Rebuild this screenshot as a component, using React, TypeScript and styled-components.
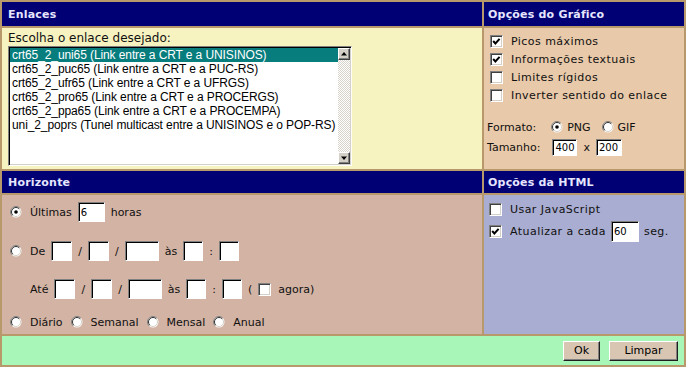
import React from "react";
import styled, { createGlobalStyle } from "styled-components";

const GlobalStyle = createGlobalStyle`
  html, body {
    margin: 0;
    padding: 0;
    background: #ffffff;
  }
  body {
    font-family: "DejaVu Sans", Verdana, sans-serif;
    font-size: 11px;
    color: #101010;
  }
`;

const Frame = styled.div`
  width: 686px;
  height: 367px;
  box-sizing: border-box;
  display: grid;
  grid-template-columns: 480px 200px;
  grid-template-rows: 24px 141px 22px 139px 29px;
  gap: 2px;
  padding: 2px;
  background: #b8996c;
`;

const Header = styled.div<{ $inset: number }>`
  background: #000074;
  color: #e6e6ff;
  font-weight: bold;
  font-size: 11px;
  display: flex;
  align-items: center;
  padding-left: ${(p) => p.$inset}px;
  letter-spacing: 0.2px;
`;

const Panel = styled.div<{ $bg: string; $pad: string }>`
  background: ${(p) => p.$bg};
  padding: ${(p) => p.$pad};
  box-sizing: border-box;
  display: flex;
  flex-direction: column;
  overflow: hidden;
`;

const Footer = styled.div`
  grid-column: 1 / -1;
  background: #a8f7b8;
  display: flex;
  justify-content: flex-end;
  align-items: center;
  gap: 9px;
  padding-right: 6px;
`;

const Label = styled.div`
  height: 13px;
  line-height: 13px;
  font-size: 12px;
  margin-bottom: 1px;
`;

const ListBox = styled.div`
  width: 344px;
  height: 120px;
  box-sizing: border-box;
  border: 1px solid;
  border-color: #808080 #ffffff #ffffff #808080;
  box-shadow: inset 1px 1px 0 #000000, inset -1px -1px 0 #d4d0c8;
  padding: 1px;
  background: #ffffff;
  display: flex;
  font-family: "Liberation Sans", Arial, sans-serif;
  font-size: 12px;
`;

const Options = styled.div`
  flex: 1;
  display: flex;
  flex-direction: column;
`;

const Option = styled.div<{ $selected?: boolean }>`
  height: 14px;
  line-height: 14px;
  padding-left: 2px;
  white-space: nowrap;
  letter-spacing: -0.1px;
  background: ${(p) => (p.$selected ? "#087d7d" : "transparent")};
  color: ${(p) => (p.$selected ? "#ffffff" : "#000000")};
`;

const ScrollBar = styled.div`
  width: 12px;
  display: flex;
  flex-direction: column;
  justify-content: space-between;
  background: repeating-conic-gradient(#ffffff 0 25%, #d8d4cc 0 50%) 0 0 / 2px 2px;
`;

const ScrollButton = styled.div`
  width: 12px;
  height: 12px;
  box-sizing: border-box;
  background: #d4d0c8;
  border: 1px solid;
  border-color: #ffffff #404040 #404040 #ffffff;
  box-shadow: inset -1px -1px 0 #808080;
  display: flex;
  align-items: center;
  justify-content: center;
`;

const Row = styled.div<{ $h: number; $top?: number; $left?: number; $gap?: number }>`
  height: ${(p) => p.$h}px;
  margin-top: ${(p) => p.$top ?? 0}px;
  margin-left: ${(p) => p.$left ?? 0}px;
  display: flex;
  align-items: center;
  gap: ${(p) => p.$gap ?? 6}px;
  white-space: nowrap;
`;

const Text = styled.span<{ $ml?: number; $wide?: boolean }>`
  margin-left: ${(p) => p.$ml ?? 0}px;
  line-height: 13px;
  letter-spacing: ${(p) => (p.$wide ? "0.45px" : "normal")};
`;

const Spacer = styled.span<{ $w: number }>`
  width: ${(p) => p.$w}px;
  flex: none;
`;

const Field = styled.input<{ $w: number; $h: number }>`
  width: ${(p) => p.$w}px;
  height: ${(p) => p.$h}px;
  box-sizing: border-box;
  flex: none;
  margin: 0;
  padding: 0 0 0 2px;
  background: #ffffff;
  border: 1px solid;
  border-color: #808080 #ffffff #ffffff #808080;
  box-shadow: inset 1px 1px 0 #000000;
  font-family: "DejaVu Sans", Verdana, sans-serif;
  font-size: 10px;
  color: #000000;
  outline: none;
`;

const Box = styled.span`
  width: 13px;
  height: 13px;
  box-sizing: border-box;
  flex: none;
  background: #ffffff;
  border: 1px solid;
  border-color: #808080 #ffffff #ffffff #808080;
  box-shadow: inset 1px 1px 0 #404040, inset -1px -1px 0 #d4d0c8;
  display: inline-flex;
  align-items: center;
  justify-content: center;
`;

const Button = styled.button<{ $w: number }>`
  width: ${(p) => p.$w}px;
  height: 20px;
  margin: 0;
  padding: 0;
  box-sizing: border-box;
  background: #d9c6b2;
  border: 1px solid;
  border-color: #ffffff #202020 #202020 #ffffff;
  box-shadow: inset -1px -1px 0 #808080;
  font-family: "DejaVu Sans", Verdana, sans-serif;
  font-size: 11px;
  color: #000000;
`;

function Checkbox({ checked }: { checked?: boolean }) {
  return (
    <Box>
      {checked && (
        <svg width="9" height="9" viewBox="0 0 9 9">
          <polyline points="1.2,4 3.4,6.4 7.6,1.8" fill="none" stroke="#000" strokeWidth="2" />
        </svg>
      )}
    </Box>
  );
}

function Radio({ checked }: { checked?: boolean }) {
  return (
    <svg width="12" height="12" viewBox="0 0 12 12" style={{ flex: "none" }}>
      <circle cx="6" cy="6" r="5.5" fill="#ffffff" />
      <path d="M2.1 9.9 A5.5 5.5 0 0 1 9.9 2.1" fill="none" stroke="#808080" strokeWidth="1" />
      <path d="M2.8 9.2 A4.5 4.5 0 0 1 9.2 2.8" fill="none" stroke="#303030" strokeWidth="1" />
      <path d="M9.2 2.8 A4.5 4.5 0 0 1 2.8 9.2" fill="none" stroke="#d4d0c8" strokeWidth="1" />
      {checked && <circle cx="6" cy="6" r="1.8" fill="#000000" />}
    </svg>
  );
}

const links = [
  "crt65_2_uni65 (Link entre a CRT e a UNISINOS)",
  "crt65_2_puc65 (Link entre a CRT e a PUC-RS)",
  "crt65_2_ufr65 (Link entre a CRT e a UFRGS)",
  "crt65_2_pro65 (Link entre a CRT e a PROCERGS)",
  "crt65_2_ppa65 (Link entre a CRT e a PROCEMPA)",
  "uni_2_poprs (Tunel multicast entre a UNISINOS e o POP-RS)",
];

const graphOptions = [
  { label: "Picos máximos", checked: true },
  { label: "Informações textuais", checked: true },
  { label: "Limites rígidos", checked: false },
  { label: "Inverter sentido do enlace", checked: false },
];

export default function App() {
  return (
    <>
      <GlobalStyle />
      <Frame>
        <Header $inset={6}>Enlaces</Header>
        <Header $inset={4}>Opções do Gráfico</Header>

        <Panel $bg="#f7f3c1" $pad="4px 0 0 6px">
          <Label>Escolha o enlace desejado:</Label>
          <ListBox>
            <Options>
              {links.map((link, i) => (
                <Option key={i} $selected={i === 0}>
                  {link}
                </Option>
              ))}
            </Options>
            <ScrollBar>
              <ScrollButton>
                <svg width="6" height="4" viewBox="0 0 6 4">
                  <polygon points="3,0 6,3.5 0,3.5" fill="#000" />
                </svg>
              </ScrollButton>
              <ScrollButton>
                <svg width="6" height="4" viewBox="0 0 6 4">
                  <polygon points="0,0.5 6,0.5 3,4" fill="#000" />
                </svg>
              </ScrollButton>
            </ScrollBar>
          </ListBox>
        </Panel>

        <Panel $bg="#e8c9a9" $pad="4px 0 0 3px">
          {graphOptions.map((o, i) => (
            <Row key={i} $h={18} $left={3} $gap={8}>
              <Checkbox checked={o.checked} />
              <Text $wide>{o.label}</Text>
            </Row>
          ))}
          <Row $h={20} $top={13} $gap={4}>
            <Text>Formato:</Text>
            <Spacer $w={7} />
            <Radio checked />
            <Text>PNG</Text>
            <Spacer $w={3} />
            <Radio />
            <Text>GIF</Text>
          </Row>
          <Row $h={20} $gap={6}>
            <Text>Tamanho:</Text>
            <Spacer $w={0} />
            <Field $w={25} $h={17} readOnly defaultValue="400" />
            <Text>x</Text>
            <Field $w={26} $h={17} readOnly defaultValue="200" />
          </Row>
        </Panel>

        <Header $inset={6}>Horizonte</Header>
        <Header $inset={4}>Opções da HTML</Header>

        <Panel $bg="#d3b3a3" $pad="6px 0 0 8px">
          <Row $h={22} $gap={6}>
            <Radio checked />
            <Text $ml={2}>Últimas</Text>
            <Field $w={27} $h={20} readOnly defaultValue="6" />
            <Text>horas</Text>
          </Row>
          <Row $h={22} $top={17} $gap={6}>
            <Radio />
            <Text $ml={2}>De</Text>
            <Field $w={21} $h={20} readOnly />
            <Text>/</Text>
            <Field $w={21} $h={20} readOnly />
            <Text>/</Text>
            <Field $w={34} $h={20} readOnly />
            <Text>às</Text>
            <Field $w={20} $h={20} readOnly />
            <Text>:</Text>
            <Field $w={20} $h={20} readOnly />
          </Row>
          <Row $h={22} $top={16} $gap={6}>
            <Spacer $w={14} />
            <Text>Até</Text>
            <Field $w={21} $h={20} readOnly />
            <Text>/</Text>
            <Field $w={21} $h={20} readOnly />
            <Text>/</Text>
            <Field $w={34} $h={20} readOnly />
            <Text>às</Text>
            <Field $w={20} $h={20} readOnly />
            <Text>:</Text>
            <Field $w={20} $h={20} readOnly />
            <Text>(</Text>
            <Checkbox />
            <Text $ml={1}>agora)</Text>
          </Row>
          <Row $h={22} $top={11} $gap={8}>
            <Radio />
            <Text>Diário</Text>
            <Radio />
            <Text>Semanal</Text>
            <Radio />
            <Text>Mensal</Text>
            <Radio />
            <Text>Anual</Text>
          </Row>
        </Panel>

        <Panel $bg="#a9add1" $pad="5px 0 0 5px">
          <Row $h={18} $gap={8}>
            <Checkbox />
            <Text $wide>Usar JavaScript</Text>
          </Row>
          <Row $h={22} $top={2} $gap={5}>
            <Checkbox checked />
            <Text $ml={3} $wide>Atualizar a cada</Text>
            <Field $w={28} $h={21} readOnly defaultValue="60" />
            <Text $wide>seg.</Text>
          </Row>
        </Panel>

        <Footer>
          <Button $w={37}>Ok</Button>
          <Button $w={69}>Limpar</Button>
        </Footer>
      </Frame>
    </>
  );
}
